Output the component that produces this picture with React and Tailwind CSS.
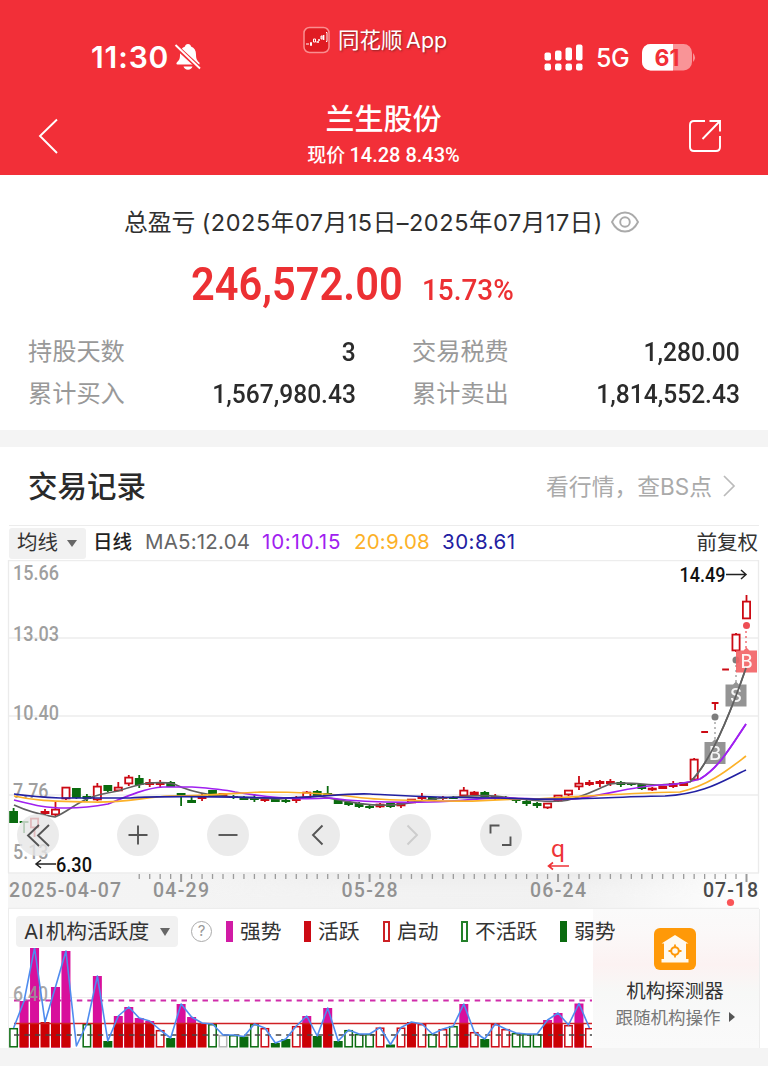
import React from 'react';

const RED = '#cc0a14';
const GREEN = '#0a6b0f';
const MAGENTA = '#d80f9c';
const px = (i) => 13.6 + i * 10.47;

// [kind, bodyTop, bodyBottom, wickTop, wickBottom] — r: hollow rise, s: solid rise, g: fall
const CANDLES = [
  ['g', 811, 823, 808, 823], ['g', 821, 823, 821, 833], ['r', 818, 828, 818, 837], ['s', 811, 814, 809, 816],
  ['r', 809, 815, 802, 816], ['r', 787, 799, 787, 800], ['g', 788, 798, 788, 799], ['g', 796, 799, 794, 801],
  ['r', 786, 800, 783, 801], ['g', 785, 791, 785, 792], ['r', 787, 791, 782, 791], ['r', 777, 784, 775, 786],
  ['g', 778, 785, 775, 788], ['s', 782, 785, 779, 787], ['s', 782, 785, 780, 787], ['g', 782, 787, 781, 787],
  ['g', 793, 797, 793, 806], ['g', 800, 803, 795, 803], ['s', 796, 799, 793, 801], ['g', 790, 796, 790, 797],
  ['s', 793, 796, 793, 796], ['g', 796, 798, 795, 799], ['g', 797, 800, 796, 800], ['g', 797, 800, 794, 802],
  ['s', 799, 801, 798, 802], ['g', 799, 802, 799, 802], ['g', 800, 802, 799, 803], ['s', 799, 801, 796, 803],
  ['r', 792, 798, 791, 798], ['g', 791, 796, 790, 797], ['g', 793, 796, 786, 796], ['g', 799, 804, 799, 804],
  ['g', 802, 805, 801, 806], ['g', 803, 807, 802, 808], ['g', 806, 808, 804, 809], ['r', 804, 807, 803, 808],
  ['g', 803, 807, 803, 808], ['r', 803, 806, 802, 808], ['r', 799, 803, 799, 803], ['s', 796, 799, 793, 800],
  ['g', 797, 800, 797, 800], ['s', 797, 799, 796, 800], ['g', 797, 799, 796, 799], ['r', 790, 796, 787, 797],
  ['r', 792, 795, 791, 795], ['g', 792, 797, 791, 797], ['s', 796, 799, 794, 800], ['g', 797, 799, 796, 800],
  ['g', 800, 801, 798, 803], ['g', 801, 804, 800, 806], ['g', 803, 806, 802, 808], ['r', 803, 808, 803, 809],
  ['r', 795, 801, 795, 802], ['r', 790, 795, 790, 796], ['r', 783, 787, 776, 790], ['s', 782, 785, 780, 786],
  ['s', 781, 784, 780, 787], ['s', 781, 784, 779, 786], ['g', 782, 785, 781, 787], ['g', 783, 785, 783, 786],
  ['g', 784, 789, 784, 790], ['r', 788, 790, 787, 791], ['s', 786, 789, 786, 789], ['s', 783, 787, 781, 788],
  ['s', 782, 786, 782, 786], ['r', 759, 780, 758, 781], ['s', 731, 733, 731, 733], ['s', 702, 704, 702, 710],
  ['s', 668.5, 670.5, 668.5, 670.5], ['r', 634, 651, 633, 652], ['r', 601, 619, 595, 619],
];

// [style, top] — p: strong, r: active, h: starting, g: inactive, w: weak, n: neutral, x: none
const ACTIVITY = [
  ['g', 1028], ['p', 1001], ['p', 948], ['r', 1022], ['p', 987], ['p', 951], ['x', 1046], ['g', 1024], ['p', 976],
  ['w', 1041], ['p', 1016], ['p', 1007], ['p', 1018], ['p', 1021], ['h', 1030], ['w', 1038], ['p', 1004], ['p', 1017],
  ['r', 1023], ['g', 1024], ['n', 1035], ['g', 1035], ['w', 1036.5], ['g', 1024], ['h', 1028], ['w', 1043], ['w', 1039],
  ['h', 1026], ['p', 1016], ['w', 1036], ['p', 1008], ['w', 1041], ['g', 1030], ['g', 1034], ['g', 1034], ['h', 1027.5],
  ['w', 1044.5], ['h', 1027.5], ['r', 1022], ['h', 1024], ['g', 1034], ['h', 1029], ['g', 1026], ['p', 1004], ['h', 1032],
  ['w', 1039], ['h', 1024], ['h', 1029], ['g', 1033], ['g', 1034], ['g', 1034], ['p', 1020], ['p', 1013], ['h', 1025],
  ['p', 1003.5], ['h', 1028],
];

function Candle({ i, c }) {
  const [kind, top, bottom, high, low] = c;
  const x = px(i);
  const color = kind === 'g' ? GREEN : RED;
  return (
    <g fill={color} stroke={color} strokeWidth="1.8">
      <path d={`M${x} ${high}V${top}M${x} ${bottom}V${low}`} fill="none" />
      {kind === 'r' ? (
        <rect x={x - 3.6} y={top + 0.6} width="7.2" height={bottom - top - 1.2} fill="#fff" />
      ) : (
        <rect x={x - (i > 65 ? 3.4 : 4.4)} y={top} width={i > 65 ? 6.8 : 8.8} height={bottom - top} stroke="none" />
      )}
    </g>
  );
}

function Tag({ x, y, label, color }) {
  return (
    <g>
      <path d={`M${x - 10.5} ${y - 11}H${x - 3}L${x} ${y - 14}L${x + 3} ${y - 11}H${x + 10.5}V${y + 11}H${x - 10.5}Z`} fill={color} />
      <text x={x} y={y + 6.5} fontSize="18.5" fontWeight="500" textAnchor="middle" fill="#fff" fillOpacity="0.92" className="font-['Inter',sans-serif]">{label}</text>
    </g>
  );
}

function PriceChart() {
  const labels = [['15.66', 580, 46], ['13.03', 641, 46], ['10.40', 719.5, 46], ['7.76', 798, 35.5], ['5.13', 859, 35.5]];
  const buttons = [
    [16.5, 'M35 13.5 24 24 35 34.5M25 13.5 14 24 25 34.5', '#555'],
    [116.5, 'M11.5 21h19M21 11.5v19', '#555'],
    [207, 'M11.5 21h19', '#555'],
    [298, 'M24.5 11.5 15 21l9.500 9.500', '#555'],
    [388.500, 'M18.500 11.500 28 21l-9.500 9.500', '#ccc'],
    [479.500, 'M10.500 19.500V11.500H19.500M22 31H30.500V22.500', '#555'],
  ];
  return (
    <div className="relative h-[349px]">
      <svg className="block font-['Roboto',sans-serif]" width="768" height="349" viewBox="0 560 768 349">
        <defs>
          <linearGradient id="axis" x1="0" x2="1" y1="0" y2="0">
            <stop offset="0" stopColor="#f5f5f5" /><stop offset="0.75" stopColor="#f1f1f1" /><stop offset="0.97" stopColor="#fdfdfd" />
          </linearGradient>
          <linearGradient id="axisFade" x1="0" x2="0" y1="0" y2="1">
            <stop offset="0" stopColor="#e9e9e9" /><stop offset="0.7" stopColor="#f5f5f5" stopOpacity="0" />
          </linearGradient>
          <linearGradient id="sides" x1="0" x2="1" y1="0" y2="0">
            <stop offset="0.1" stopColor="#fff" stopOpacity="0" /><stop offset="0.4" stopColor="#fff" /><stop offset="0.75" stopColor="#fff" /><stop offset="1" stopColor="#fff" stopOpacity="0" />
          </linearGradient>
          <mask id="sideMask"><rect x="120" y="873" width="620" height="36" fill="url(#sides)" /></mask>
        </defs>
        <rect x="8" y="873" width="751" height="36" fill="url(#axis)" />
        <rect x="120" y="873" width="620" height="36" fill="url(#axisFade)" opacity="0.7" mask="url(#sideMask)" />
        <path d="M8 560.500H759M8 638H758M8 716H758M8 795H758M8 873H759M8 908.500H759" stroke="#ededed" strokeWidth="1.300" fill="none" />
        <path d="M8.500 560V873M758.500 560V873" stroke="#ebebeb" strokeWidth="1.300" />
        {labels.map(([v, y, w]) => (
          <text key={y} x="13" y={y} fontSize="19.500" fontWeight="500" fill="#9f9f9f" textLength={w} lengthAdjust="spacingAndGlyphs">{v}</text>
        ))}
        {CANDLES.map((c, i) => <Candle key={i} i={i} c={c} />)}
        <g fill="none" strokeWidth="1.700" strokeLinejoin="round">
          <path d="M14 805C27 811 42 815 55 817C67 812 75 804 87 799C96 795 105 793 118 791C130 787 142 784 150 783Q165 782 174 784C188 791 199 793 212 795C230 797 250 798 280 799L318 796C345 801 365 806 390 805S420 799 455 797S485 795 520 799S550 801 562 801C580 799 597 789 610 784C625 781 645 785 660 785C672 784 680 784 690 782C706 767 725 729 746 668" stroke="#606060" />
          <path d="M14 800C38 806 46 808 66 808Q87 808 108 804C125 797 145 788 163 787H192C207 788 222 789 235 792C265 797 290 800 330 798C360 802 390 803 430 802S480 797 512 798S550 800 575 799C605 795 635 786 660 785C678 785 690 782 700 779C719 768 732 745 746 724" stroke="#a020f0" />
          <path d="M14 796C40 802 60 801 92 802S145 797 170 796C205 796 225 794 260 792C295 792 325 793 355 797S405 800 445 801S485 799 535 799C590 796 625 793 680 792C710 785 729 769 746 756" stroke="#fcb128" />
          <path d="M14 794Q35 797 60 798H130C165 795 225 797 280 798C320 798 340 793 370 794C410 796 440 798 500 798C565 802 620 796 665 796C705 794 724 780 746 770" stroke="#2220a2" />
        </g>
        <g stroke="#9b9b9b">
          {CANDLES.map((_, i) => i > 11 && (
            <path key={i} d={`M${px(i)} 874V${i % 18 === 16 ? 882 : 879}`} strokeWidth={i % 18 === 16 ? 2 : 1.3} />
          ))}
        </g>
        <g fontSize="20" fontWeight="500" fill="#929292">
          <text x="9" y="897" textLength="112" lengthAdjust="spacing" fontSize="19.500">2025-04-07</text>
          <text x="153" y="897" textLength="56" lengthAdjust="spacing" fontSize="19.500">04-29</text>
          <text x="341.500" y="897" textLength="56" lengthAdjust="spacing" fontSize="19.500">05-28</text>
          <text x="530" y="897" textLength="56" lengthAdjust="spacing" fontSize="19.500">06-24</text>
          <text x="703" y="897" textLength="55" lengthAdjust="spacing" fontSize="19.500" fill="#4a4a4a">07-18</text>
        </g>
        <circle cx="730.500" cy="902.500" r="3.600" fill="#fa5558" />
        <g stroke="#999" strokeWidth="1.300" strokeDasharray="2 3"><path d="M715 717V740M736 660V682" /></g>
        <path d="M746 626V650" stroke="#f05a60" strokeWidth="1.300" strokeDasharray="2 3" />
        <circle cx="715" cy="717" r="3.500" fill="#7d7d7d" /><circle cx="736" cy="660" r="3.500" fill="#7d7d7d" /><circle cx="746.500" cy="625.500" r="3.500" fill="#ee4e54" />
        <g opacity="0.920">
          <Tag x={715} y={753} label="B" color="#8c8c8c" />
          <Tag x={736} y={695.500} label="S" color="#8c8c8c" />
          <Tag x={746.500} y={661.500} label="B" color="#f26468" />
        </g>
        <path d="M690 782C706 767 725 729 746 668" fill="none" stroke="#606060" strokeWidth="1.700" />
        <path d="M700 779C719 768 732 745 746 724" fill="none" stroke="#a020f0" strokeWidth="1.700" />
        <text x="679.500" y="582" fontSize="20.500" fontWeight="500" fill="#111" textLength="46" lengthAdjust="spacingAndGlyphs">14.49</text>
        <path d="M726 574.500H746M741 570l5 4.500-5 4.500" fill="none" stroke="#222" strokeWidth="1.500" />
        <text x="56" y="871.500" fontSize="20" fontWeight="500" fill="#111" textLength="36" lengthAdjust="spacingAndGlyphs">6.30</text>
        <path d="M56 864H36M41 860l-5 4 5 4" fill="none" stroke="#222" strokeWidth="1.500" />
        <text x="551" y="857" fontSize="24" fill="#ee3438" textLength="14" lengthAdjust="spacingAndGlyphs">q</text>
        <path d="M569 866H549M553 862.500l-4.500 3.500 4.500 3.500" fill="none" stroke="#ee3438" strokeWidth="1.600" />
      </svg>
      {buttons.map(([x, d, color]) => (
        <button key={x} className="absolute top-[254px] h-[42px] w-[42px] rounded-full bg-[#e6e6e6]/80" style={{ left: x }}>
          <svg width="42" height="42" viewBox={x === 16.5 ? '3 2.500 42 42' : '0 0 42 42'} fill="none" stroke={color} strokeWidth="1.900"><path d={d} /></svg>
        </button>
      ))}
    </div>
  );
}

function ActivityBar({ i, type, top }) {
  const x = px(i);
  const bottom = 1047.5;
  if (type === 'x') return null;
  if (type === 'g' || type === 'h' || type === 'n') {
    const stroke = { g: GREEN, h: RED, n: '#b5b5b5' }[type];
    return <rect x={x - 3.7} y={top + 0.7} width="7.4" height={bottom - top - 1.4} fill="#fff" stroke={stroke} strokeWidth="1.500" />;
  }
  return (
    <g>
      <rect x={x - 4.5} y={top} width="9" height={bottom - top} fill={type === 'w' ? GREEN : type === 'p' ? MAGENTA : '#cb0004'} />
      {type === 'p' && <rect x={x - 4.5} y="1023" width="9" height={bottom - 1023} fill="#cb0004" />}
    </g>
  );
}

function ActivityChart() {
  return (
    <svg className="block" width="583" height="100" viewBox="9 948 583 100">
      <path d="M9 997.500H592" stroke="#ededed" />
      <path d="M14 1000.500H592" stroke="#d02caa" strokeWidth="1.800" strokeDasharray="5.500 4.970" />
      {ACTIVITY.map(([type, top], i) => <ActivityBar key={i} i={i} type={type} top={top} />)}
      <path d="M14 1035H592" stroke="#444" strokeWidth="1.400" strokeDasharray="5.500 4.970" />
      <path d="M14 1023.500H592" stroke="#cf2024" strokeWidth="1.600" />
      <text x="13" y="1001" fontSize="19.500" fontWeight="500" fill="#999" fillOpacity="0.850" textLength="35" lengthAdjust="spacingAndGlyphs" className="font-['Roboto',sans-serif]">6.40</text>
      <polyline points={ACTIVITY.map(([, top], i) => `${px(i)},${top}`).join(' ')} fill="none" stroke="#4f8cef" strokeWidth="1.600" strokeLinejoin="round" />
    </svg>
  );
}

function Header() {
  return (
    <header className="h-[175px] bg-[#f22f38] text-white">
      <div className="flex h-[88px] items-start">
        <div className="flex w-[303px] items-center pl-[91px] pt-[40px]">
          <span className="w-[78px] whitespace-nowrap font-['Inter',sans-serif] text-[30px] font-semibold leading-[34px] tracking-[0.9px]">11:30</span>
          <svg className="ml-[5px]" width="28" height="28" viewBox="0 0 28 28" fill="currentColor">
            <path d="M14 1c1.800 0 2.800 1 3 2.500 3.500 1.200 5 4 5 8 0 4.500 1 6 3.500 8.300v1.700H3.500c-1.500 0-1.300-1.800-.3-2.600C5.500 17 6 15.500 6 11.500c0-4 1.500-6.800 5-8C11.200 2 12.200 1 14 1ZM9.500 23.500h9c-.5 2-2.300 3.200-4.500 3.200s-4-1.200-4.500-3.200Z" />
            <path d="M1 2.500 27 26.500" stroke="#f22f38" strokeWidth="4.500" /><path d="M1.500 2 26 25.500" stroke="#fff" strokeWidth="1.900" />
          </svg>
        </div>
        <div className="flex items-center gap-[8px] pt-[25px] [text-shadow:1px_1px_2px_#8a2528]">
          <svg width="27" height="28" viewBox="0 0 27 28" fill="none">
            <rect x="1" y="1.500" width="25" height="25" rx="5.500" fill="#e01c23" stroke="#fa8e90" strokeWidth="1.500" />
            <path d="M3 18h3M7.500 16.500h1v3h-1zM10.500 13h2v3h-2zM18 13h1v-3h-1zM23 6.500h1v9h-1" stroke="#fff" /><path d="M13.500 16h2.500M15 14h2M20.500 9v5" stroke="#fff" strokeWidth="1.700" />
          </svg>
          <span className="whitespace-nowrap font-['Inter','Noto_Sans_CJK_SC',sans-serif] text-[21.5px] leading-[30px] [word-spacing:-2.500px]">同花顺 App</span>
        </div>
        <div className="ml-auto flex items-center pr-[71px] pt-[41px]">
          <svg width="40" height="28" viewBox="0 0 40 28" fill="#fff">
            {[[0, 9.5, 8], [10.5, 7.5, 10], [21, 4.5, 13], [31.5, 1.5, 16]].map(([x, y, h]) => (
              <g key={x}><rect x={x + 0.5} y={y - 1} width="6.500" height={h} rx="2" /><rect x={x + 0.5} y="19.500" width="6.500" height="7" rx="2" /></g>
            ))}
          </svg>
          <span className="ml-[12px] w-[34px] whitespace-nowrap font-['Inter',sans-serif] text-[25px] font-medium leading-[34px] tracking-[-0.5px]">5G</span>
          <svg className="ml-[12px]" width="55" height="28" viewBox="0 0 55 28">
            <clipPath id="battery"><rect x="0" y="0" width="50" height="26.500" rx="8.500" /></clipPath>
            <g clipPath="url(#battery)"><path d="M0 0h50v28H0z" fill="#f99497" /><path d="M0 0h31v28H0z" fill="#fff" /></g>
            <path d="M51 9q4 4.500 0 9Z" fill="#f99497" />
            <text x="25" y="21.500" fontSize="23" fontWeight="700" textAnchor="middle" fill="#f22f38" className="font-['Inter',sans-serif]">61</text>
          </svg>
        </div>
      </div>
      <div className="flex h-[87px] items-center justify-between pl-[37px] pr-[46px]">
        <svg className="mt-[9px]" width="22" height="38" viewBox="0 0 22 38" fill="none" stroke="#fff" strokeWidth="1.900"><path d="M20 2.500 3 19l17 17" /></svg>
        <div className="ml-[20px] flex flex-col items-center pt-[6px] font-['Noto_Sans_CJK_SC',sans-serif]">
          <div className="whitespace-nowrap text-[29px] font-medium leading-[39px]">兰生股份</div>
          <div className="whitespace-nowrap text-[19px] font-medium leading-[34px]">现价 <span className="font-['Roboto',sans-serif] text-[20px]">14.28 8.43%</span></div>
        </div>
        <svg className="mt-[9px]" width="34" height="36" viewBox="0 0 34 36" fill="none" stroke="#fff" strokeWidth="1.900">
          <path d="M17 3H6Q2 3 2 7V29Q2 33 6 33H28Q32 33 32 29V18M21.500 3H32V13.500M32 3 14.500 21" />
        </svg>
      </div>
    </header>
  );
}

function Stat({ label, value }) {
  return (
    <div className="flex h-[42px] items-center justify-between">
      <span className="pb-[3px] text-[24.2px] text-[#999]">{label}</span>
      <span className="inline-block origin-right scale-x-[0.945] font-['Roboto',sans-serif] text-[26px] font-medium text-[#2b2b2b]">{value}</span>
    </div>
  );
}

function Summary() {
  return (
    <section className="h-[255px] pt-[29px]">
      <div className="flex h-[36px] items-center pl-[124px] text-[#2f2f2f]">
        <span className="w-[481px] whitespace-nowrap text-[23.8px]">总盈亏 <span className="ml-[1px] font-['Inter','Noto_Sans_CJK_SC',sans-serif] text-[23.5px] tracking-[0.55px]">(2025年07月15日–2025年07月17日)</span></span>
        <svg className="ml-[6px]" width="28" height="22" viewBox="0 0 28 22" fill="none" stroke="#aaa" strokeWidth="1.900">
          <path d="M1 11C4 5 9 1.500 14 1.500S24 5 27 11c-3 6-8 9.500-13 9.500S4 17 1 11Z" /><circle cx="14" cy="11" r="4.800" />
        </svg>
      </div>
      <div className="mt-[14px] flex h-[60px] items-baseline pl-[191px] font-['Roboto',sans-serif] font-medium leading-[60px] text-[#ec3033]">
        <span className="w-[231px] whitespace-nowrap"><span className="inline-block origin-left scale-x-[0.885] text-[47px] font-semibold">246,572.00</span></span>
        <span className="inline-block origin-left scale-x-[0.93] whitespace-nowrap text-[30px]">15.73%</span>
      </div>
      <div className="mt-[17px] grid grid-cols-2 gap-x-[56px] px-[28px]">
        <Stat label="持股天数" value="3" />
        <Stat label="交易税费" value="1,280.00" />
        <Stat label="累计买入" value="1,567,980.43" />
        <Stat label="累计卖出" value="1,814,552.43" />
      </div>
    </section>
  );
}

function Legend({ label, mark, width }) {
  return (
    <div className="flex items-center gap-[7px]" style={{ width }}>
      <i className={`mb-[3px] h-[21px] w-[7px] ${mark}`} />
      <span className="mb-[4px] whitespace-nowrap text-[20.8px] text-[#333]">{label}</span>
    </div>
  );
}

export default function App() {
  return (
    <main className="h-[1087px] w-[768px] overflow-hidden bg-white font-['Noto_Sans_CJK_SC',sans-serif]">
      <Header />
      <Summary />
      <div className="h-[17px] bg-[#f4f4f4]" />
      <div className="flex h-[78px] items-center justify-between pl-[28px] pr-[32px]">
        <h2 className="pb-[4px] text-[29.5px] font-medium text-[#2a2a2a]">交易记录</h2>
        <div className="flex items-center text-[22.8px] text-[#aaa]">
          <span className="whitespace-nowrap">看行情，查<span className="font-['Inter',sans-serif] text-[22.5px]">BS</span>点</span>
          <svg className="ml-[10px]" width="14" height="24" viewBox="0 0 14 24" fill="none" stroke="#bbb" strokeWidth="1.700"><path d="m2 2 10 10L2 22" /></svg>
        </div>
      </div>
      <div className="mx-[9px] flex h-[35px] items-center border-t border-[#ececec] font-['Inter','Noto_Sans_CJK_SC',sans-serif] text-[20.5px]">
        <div className="flex h-[31px] w-[77px] items-center gap-[9px] rounded-[3px] bg-[#f1f1f1] pl-[8px] text-[#333]">
          <span className="whitespace-nowrap">均线</span>
          <i className="h-0 w-0 border-x-[5px] border-t-[7px] border-x-transparent border-t-[#666]" />
        </div>
        <span className="ml-[7px] w-[52px] whitespace-nowrap text-[19.5px] font-medium text-[#222]">日线</span>
        <span className="w-[117px] whitespace-nowrap pb-[1px] tracking-[0.2px] text-[#666]">MA5:12.04</span>
        <span className="w-[92px] whitespace-nowrap pb-[1px] tracking-[0.8px] text-[#a020f0]">10:10.15</span>
        <span className="w-[88px] whitespace-nowrap pb-[1px] tracking-[0.2px] text-[#fcb128]">20:9.08</span>
        <span className="whitespace-nowrap pb-[1px] tracking-[0.5px] text-[#2220a2]">30:8.61</span>
        <span className="ml-auto mr-[1px] whitespace-nowrap text-[#333]">前复权</span>
      </div>
      <PriceChart />
      <section className="mx-[8px] grid h-[139px] grid-cols-[584px_167px] border-l border-[#ededed]">
        <div className="min-w-0">
          <div className="relative z-10 flex h-[39px] w-[620px] items-end pl-[7px]">
            <div className="mb-[1px] flex h-[31px] w-[162px] items-center justify-between rounded-[4px] bg-[#f1f1f1] pl-[8px] pr-[8px] text-[20.7px] text-[#333]">
              <span className="whitespace-nowrap font-['Inter','Noto_Sans_CJK_SC',sans-serif] [word-spacing:-4px]">AI 机构活跃度</span>
              <i className="h-0 w-0 border-x-[5.5px] border-t-[8px] border-x-transparent border-t-[#666]" />
            </div>
            <div className="mb-[1px] ml-[13px] mr-[14px] flex h-[31px] items-center">
              <span className="flex h-[21px] w-[21px] items-center justify-center rounded-full border-[1.5px] border-[#aaa] font-['Inter',sans-serif] text-[15px] text-[#999]">?</span>
            </div>
            <div className="flex h-[31px] items-center">
              <Legend label="强势" mark="bg-[#d11ba5]" width={78} />
              <Legend label="活跃" mark="bg-[#cc0a14]" width={79} />
              <Legend label="启动" mark="border-2 border-[#cc2024]" width={78} />
              <Legend label="不活跃" mark="border-2 border-[#23802a]" width={99} />
              <Legend label="弱势" mark="bg-[#0a6b0f]" width={60} />
            </div>
          </div>
          <ActivityChart />
        </div>
        <aside className="flex flex-col items-center border-r border-[#ededed] bg-[linear-gradient(180deg,#fafafa_0%,#fbf8f8_18%,#fcf2f2_40%,#f7f8f7_60%,#f9f9f9_80%,#fafafa_100%)] pr-[2px] pt-[19px]">
          <svg width="42" height="42" viewBox="0 0 42 42">
            <rect width="42" height="42" rx="6" fill="#ff9908" />
            <path d="M21 7 34.500 15.500H32V31h2.500v3.500h-27V31H10V15.500H7.500Z" fill="#fffaf0" />
            <circle cx="21" cy="23" r="3.800" fill="none" stroke="#ff9908" strokeWidth="2" /><path d="M21 16.500v3M21 26.500v3M14.500 23h3M24.500 23h3" stroke="#ff9908" strokeWidth="1.800" />
          </svg>
          <div className="mt-[5px] whitespace-nowrap text-[19.5px] leading-[30px] text-[#333]">机构探测器</div>
          <div className="flex items-center gap-[8px] whitespace-nowrap text-[17.5px] leading-[23px] text-[#777]">
            跟随机构操作
            <i className="h-0 w-0 border-y-[5px] border-l-[6px] border-y-transparent border-l-[#555]" />
          </div>
        </aside>
      </section>
      <div className="h-[18px] bg-[#f4f4f4]" />
    </main>
  );
}
